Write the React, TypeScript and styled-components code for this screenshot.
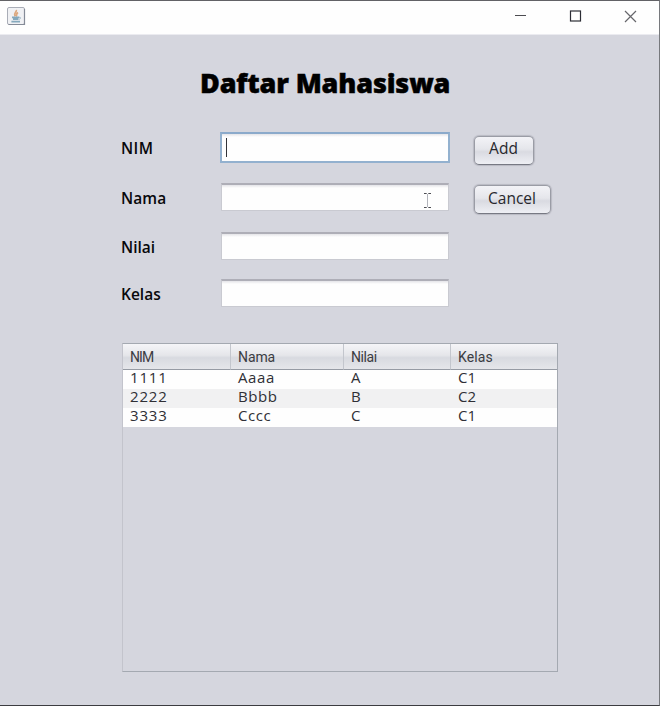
import React from "react";
import styled, { createGlobalStyle } from "styled-components";

const GlobalStyle = createGlobalStyle`
  * { box-sizing: border-box; }
  body { margin: 0; overflow: hidden; background: #d5d6de; }
`;

const Window = styled.div`
  width: 660px;
  height: 706px;
  display: flex;
  flex-direction: column;
  background: #d5d6de;
  border-top: 1px solid #626266;
  border-right: 1px solid #77797d;
  border-bottom: 1px solid #3c3c40;
  font-family: "Open Sans", "Noto Sans", sans-serif;
  color: #17171b;
`;

const TitleBar = styled.header`
  height: 34px;
  flex: none;
  display: flex;
  align-items: center;
  justify-content: space-between;
  padding: 0 21px 4px 6px;
  background: #fefefe;
  border-bottom: 1px solid #ebebf0;
`;

const WindowControls = styled.div`
  display: flex;
  gap: 40px;
  svg { display: block; }
`;

const Title = styled.h1`
  margin: 30px 0 0 200px;
  height: 36px;
  line-height: 36px;
  font-family: "Noto Sans", "Open Sans", sans-serif;
  font-size: 27px;
  font-weight: 900;
  letter-spacing: -0.15px;
  -webkit-text-stroke: 0.5px #000;
  white-space: nowrap;
  color: #000;
`;

const Form = styled.form`
  margin: 31px 0 0 121px;
  display: grid;
  grid-template-columns: 98px 254px auto;
  grid-template-rows: 51px 49px 47px 64px;
  align-items: start;
  justify-content: start;
`;

const Label = styled.label<{ $spacing?: number; $tall?: boolean }>`
  font-size: 15.5px;
  font-weight: 600;
  line-height: ${(p) => (p.$tall ? 33 : 31)}px;
  letter-spacing: ${(p) => p.$spacing ?? 0}px;
  color: #08080b;
`;

const Field = styled.div<{ $focused?: boolean }>`
  display: flex;
  align-items: center;
  width: ${(p) => (p.$focused ? 230 : 228)}px;
  height: ${(p) => (p.$focused ? 31 : 28)}px;
  margin-left: ${(p) => (p.$focused ? 1 : 2)}px;
  padding-left: 4px;
  background: linear-gradient(#e4e4e8, #fefefe 3px);
  border: ${(p) => (p.$focused ? "2px solid #93b1cf" : "1px solid #c9cad1")};
  border-top: ${(p) => (p.$focused ? "2px solid #8baacb" : "2px solid #aeaeb7")};
`;

const Caret = styled.span`
  width: 1px;
  height: 19px;
  background: #333338;
`;

const Pointer = styled.svg`
  margin: 6px 16px 0 auto;
`;

const Button = styled.button<{ $width: number; $offset: number; $lift: number }>`
  width: ${(p) => p.$width}px;
  height: 29px;
  margin: ${(p) => p.$offset}px 0 0 1px;
  padding: 0 1px ${(p) => p.$lift}px 0;
  border: 1px solid #9a9ca5;
  border-bottom-color: #777983;
  border-radius: 5px;
  background: linear-gradient(#f3f3f7, #e5e6eb 45%, #d9dae1 55%, #eeeff4);
  box-shadow: 0 0 1px 1px #b9bac3;
  font-family: "Open Sans", "Noto Sans", sans-serif;
  font-size: 15.5px;
  line-height: 22px;
  color: #28282d;
`;

const TablePane = styled.div`
  width: 436px;
  height: 329px;
  margin-left: 122px;
  border: 1px solid #a4a9b1;
  border-left-color: #c3c4cc;
`;

const Table = styled.table`
  width: 434px;
  table-layout: fixed;
  border-collapse: separate;
  border-spacing: 0;
`;

const HeaderCell = styled.th<{ $spacing: number }>`
  height: 26px;
  padding: 0 0 0 7px;
  border-bottom: 1px solid #969ba4;
  border-right: 1px solid #c3c6cd;
  background: linear-gradient(#f5f5f8, #e5e6ea 45%, #d8dae0 55%, #e5e6ea);
  font-family: Roboto, "Liberation Sans", sans-serif;
  font-size: 14px;
  font-weight: 400;
  line-height: 18px;
  letter-spacing: ${(p) => p.$spacing}px;
  text-align: left;
  color: #3b3c42;
  &:last-child { border-right: 0; }
`;

const Row = styled.tr`
  background: #fefefe;
  &:nth-child(even) { background: #f1f1f2; }
`;

const Cell = styled.td<{ $spacing: number }>`
  height: 19px;
  padding: 0 0 5px 7px;
  font-size: 15px;
  line-height: 14px;
  letter-spacing: ${(p) => p.$spacing}px;
  color: #2f2f35;
`;

const columns = [
  { name: "NIM", width: 108, spacing: 0.8, headSpacing: -0.9 },
  { name: "Nama", width: 113, spacing: 0.6, headSpacing: -0.1 },
  { name: "Nilai", width: 107, spacing: 0, headSpacing: -0.4 },
  { name: "Kelas", width: 106, spacing: 0, headSpacing: 0.1 },
];

const students = [
  ["1111", "Aaaa", "A", "C1"],
  ["2222", "Bbbb", "B", "C2"],
  ["3333", "Cccc", "C", "C1"],
];

function JavaIcon() {
  return (
    <svg width="20" height="20" viewBox="0 0 20 20" fill="none">
      <rect x="1.5" y="1.5" width="17" height="17" rx="1.5" fill="#f0f1f4" stroke="#a9adb7" />
      <path d="M2.5 18.5H18.5V3" stroke="#858b98" strokeWidth="1.2" />
      <path d="M10.2 4C11.2 6 7.2 7 9 10.2M12 6.4C9.4 8 11.6 8.6 10 10.4" stroke="#dda980" strokeWidth="1.8" />
      <path d="M6 11.3H13M7 13.2H12.4M5.4 15.7H14" stroke="#85a9bd" strokeWidth="1.8" />
      <path d="M13 11.3C15.3 10.8 15 13 12.8 13.3" stroke="#9db7c7" />
    </svg>
  );
}

export default function App() {
  return (
    <>
      <GlobalStyle />
      <Window>
        <TitleBar>
          <JavaIcon />
          <WindowControls>
            <svg width="15" height="15" viewBox="0 0 15 15" stroke="#4c4c51">
              <path d="M2 7.5H13" />
            </svg>
            <svg width="15" height="15" viewBox="0 0 15 15" fill="none" stroke="#2c2d35" strokeWidth="1.2">
              <rect x="2.5" y="3" width="10" height="10" />
            </svg>
            <svg width="15" height="15" viewBox="0 0 15 15" stroke="#66666b" strokeWidth="1.2">
              <path d="M2 3L13 14M13 3L2 14" />
            </svg>
          </WindowControls>
        </TitleBar>
        <Title>Daftar Mahasiswa</Title>
        <Form>
          <Label $tall $spacing={0.4}>NIM</Label>
          <Field $focused>
            <Caret />
          </Field>
          <Button type="button" $width={60} $offset={4} $lift={5}>Add</Button>
          <Label $spacing={0.1}>Nama</Label>
          <Field>
            <Pointer width="9" height="17" viewBox="0 0 9 17" fill="none">
              <path d="M4.5 2V15" stroke="#b1b3ba" />
              <path d="M1 1.5H3.7M5.3 1.5H8M1 15.5H3.7M5.3 15.5H8" stroke="#4c4d53" />
            </Pointer>
          </Field>
          <Button type="button" $width={77} $offset={2} $lift={3}>Cancel</Button>
          <Label>Nilai</Label>
          <Field />
          <span />
          <Label>Kelas</Label>
          <Field />
        </Form>
        <TablePane>
          <Table>
            <colgroup>
              {columns.map((c) => <col key={c.name} width={c.width} />)}
            </colgroup>
            <thead>
              <tr>
                {columns.map((c) => (
                  <HeaderCell key={c.name} $spacing={c.headSpacing}>{c.name}</HeaderCell>
                ))}
              </tr>
            </thead>
            <tbody>
              {students.map((s) => (
                <Row key={s[0]}>
                  {s.map((v, i) => <Cell key={i} $spacing={columns[i].spacing}>{v}</Cell>)}
                </Row>
              ))}
            </tbody>
          </Table>
        </TablePane>
      </Window>
    </>
  );
}
